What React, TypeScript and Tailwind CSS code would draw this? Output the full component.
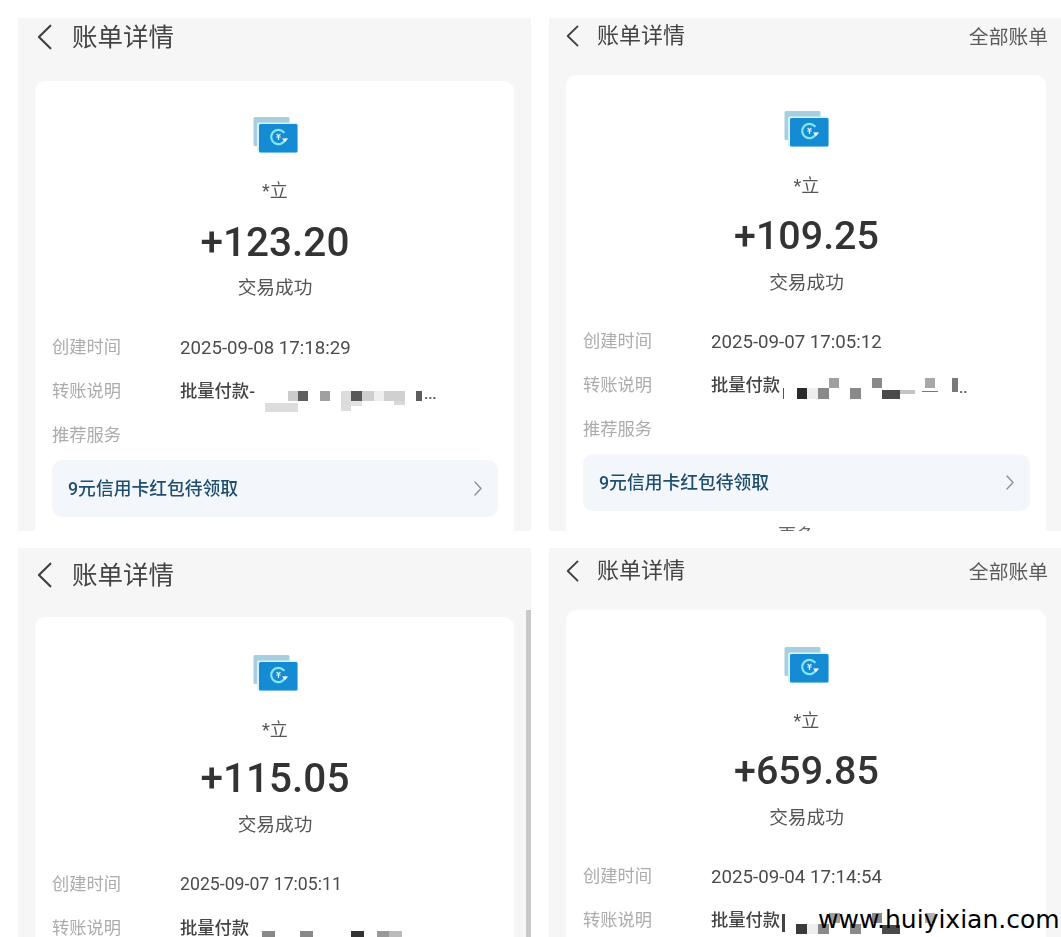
import React from "react";

type Block = [number, number, number, number, string];

const FONT = "font-['Roboto','Noto_Sans_CJK_SC',sans-serif]";

function BillIcon() {
  return (
    <svg width="46" height="38" viewBox="0 0 46 38" fill="none">
      <rect x="1.5" y="2" width="36" height="29" rx="1.5" fill="#a8cfe0" />
      <rect x="5" y="7.5" width="41" height="30.5" rx="2" fill="#d6f2fa" />
      <rect x="7" y="9" width="38.5" height="28.5" rx="1.5" fill="#148bd3" />
      <path d="M31.8 17.2a7.2 7.2 0 1 0 1.4 7.2" stroke="#86e8f5" strokeWidth="2.2" strokeLinecap="round" />
      <path d="M30 23.6h6.2l-3.1 3.3z" fill="#ffffff" />
      <path d="M24.6 19l1.9 2 1.9-2M24.3 22h4.4M26.5 21v4" stroke="#dff6fb" strokeWidth="1.2" />
    </svg>
  );
}

function Row({ label, children, valueClass }: { label: string; children?: React.ReactNode; valueClass: string }) {
  return (
    <div className="flex h-[44px] items-center">
      <span className="w-[128px] shrink-0 text-[17.3px] leading-none text-[#acacac]">{label}</span>
      <span className={valueClass}>{children}</span>
    </div>
  );
}

function Panel(props: {
  headerCls: string;
  cardCls: string;
  backCls: string;
  titleCls: string;
  amount: string;
  time: string;
  note: string;
  showAllCls?: string;
  promo?: boolean;
  rowsCls: string;
  amountCls: string;
  nameCls: string;
  statusCls: string;
  timeCls: string;
  iconCls: string;
  more?: boolean;
}) {
  return (
    <section className="flex flex-col overflow-hidden bg-[#f6f6f6] blur-[0.6px]">
      <header className={`flex shrink-0 items-start justify-between ${props.headerCls}`}>
        <div className="flex items-center">
          <svg className={props.backCls} viewBox="0 0 14 24" fill="none">
            <path d="M12.5 1.5L1.8 12l10.7 10.5" stroke="#3f3f3f" strokeWidth="2" strokeLinecap="round" strokeLinejoin="round" />
          </svg>
          <h1 className={`font-normal text-[#444444] ${props.titleCls}`}>账单详情</h1>
        </div>
        {props.showAllCls && (
          <span className={`mr-[13px] text-[19.8px] leading-[24px] text-[#5a5a5a] ${props.showAllCls}`}>全部账单</span>
        )}
      </header>
      <div className={`flex-1 rounded-t-[10px] bg-white pl-[17px] pr-[16px] ${props.cardCls}`}>
        <div className={`flex h-[38px] items-center justify-center ${props.iconCls}`}>
          <BillIcon />
        </div>
        <p className={`h-[28px] text-center text-[18px] leading-[28px] text-[#555555] ${props.nameCls}`}>*立</p>
        <p className={`h-[50px] text-center font-['Roboto'] font-medium leading-[50px] text-[#333333] ${props.amountCls}`}>
          {props.amount}
        </p>
        <p className={`h-[28px] text-center text-[18.7px] leading-[28px] text-[#555555] ${props.statusCls}`}>交易成功</p>
        <div className={props.rowsCls}>
          <Row label="创建时间" valueClass={`font-['Roboto'] leading-none text-[#4b4b4b] ${props.timeCls}`}>
            {props.time}
          </Row>
          <Row label="转账说明" valueClass="text-[17.3px] font-medium leading-none text-[#444444]">
            {props.note}
          </Row>
          {props.promo && <Row label="推荐服务" valueClass="" />}
        </div>
        {props.promo && (
          <div className="mt-[2px] flex h-[57px] items-center justify-between rounded-[10px] bg-[#f3f7fb] pl-[16px] pr-[16px]">
            <span className="text-[17.8px] font-medium leading-none text-[#1f4e6e]">9元信用卡红包待领取</span>
            <svg width="8" height="15" viewBox="0 0 8 15" fill="none">
              <path d="M1 1l6 6.5-6 6.5" stroke="#8a939a" strokeWidth="1.4" strokeLinecap="round" strokeLinejoin="round" />
            </svg>
          </div>
        )}
        {props.more && <p className="ml-[195px] mt-[15px] text-[18px] leading-[20px] text-[#666666]">更多</p>}
      </div>
    </section>
  );
}

const mosaics: Block[] = [
  [265, 403, 33, 9, "#dddddd"],
  [288, 391, 10, 10, "#cccccc"],
  [298, 391, 10, 10, "#606060"],
  [320, 391, 10, 10, "#a0a0a0"],
  [341, 391, 10, 20, "#dcdcdc"],
  [351, 391, 11, 10, "#585858"],
  [362, 391, 12, 10, "#cfcfcf"],
  [351, 401, 11, 5, "#e2e2e2"],
  [374, 391, 10, 10, "#efefef"],
  [384, 391, 21, 10, "#d0d0d0"],
  [394, 401, 11, 4, "#d8d8d8"],
  [416, 391, 6, 10, "#5e5e5e"],

  [797, 388, 10, 11, "#2a2a2a"],
  [807, 388, 11, 11, "#eeeeee"],
  [818, 388, 11, 11, "#8a8a8a"],
  [829, 378, 10, 10, "#a0a0a0"],
  [850, 388, 11, 11, "#8a8a8a"],
  [872, 378, 10, 10, "#8a8a8a"],
  [882, 390, 18, 9, "#4a4a4a"],
  [900, 390, 15, 4, "#c4c4c4"],
  [925, 378, 10, 10, "#a8a8a8"],
  [922, 391, 16, 1, "#777777"],
  [952, 378, 6, 14, "#7a7a7a"],
  [783, 388, 1, 11, "#555555"],

  [262, 931, 13, 6, "#888888"],
  [300, 931, 13, 6, "#888888"],
  [351, 931, 13, 6, "#333333"],
  [377, 931, 12, 6, "#999999"],
  [389, 931, 13, 6, "#bbbbbb"],

  [782, 914, 3, 18, "#444444"],
  [796, 924, 11, 10, "#3a3a3a"],
  [807, 924, 11, 10, "#eeeeee"],
  [818, 924, 11, 10, "#8a8a8a"],
  [829, 913, 11, 10, "#a0a0a0"],
  [850, 924, 11, 10, "#8a8a8a"],
  [872, 913, 10, 10, "#8a8a8a"],
  [882, 925, 18, 9, "#4a4a4a"],
  [925, 913, 10, 10, "#b0b0b0"],
];

export default function App() {
  return (
    <div className={`relative h-[937px] w-[1061px] overflow-hidden bg-white ${FONT}`}>
      <div className="grid h-full grid-cols-[513px_512px] grid-rows-[513px_389px] gap-x-[18px] gap-y-[17px] pl-[18px] pt-[18px]">
        <Panel
          headerCls="h-[63px] pl-[19px] pt-[4px]"
          backCls="h-[26px] w-[15px] mr-[20px]"
          titleCls="text-[25.5px] leading-[30px]"
          cardCls="mx-[17px] pt-[34px]"
          iconCls=""
          nameCls="mt-[24px]"
          amountCls="mt-[12px] text-[40.5px]"
          statusCls="mt-[7px]"
          rowsCls="mt-[24px]"
          timeCls="text-[18.65px]"
          amount="+123.20"
          time="2025-09-08 17:18:29"
          note="批量付款-"
          promo
        />
        <Panel
          showAllCls="mt-[3px]"
          headerCls="h-[57px] pl-[17px] pt-[5px]"
          backCls="h-[22px] w-[13px] mr-[18px]"
          titleCls="text-[22px] leading-[26px]"
          cardCls="ml-[17px] mr-[15px] pt-[34px]"
          iconCls="pr-[2px]"
          nameCls="mt-[25px]"
          amountCls="mt-[11px] text-[39.4px]"
          statusCls="mt-[8px]"
          rowsCls="mt-[23px]"
          timeCls="text-[18.65px]"
          amount="+109.25"
          time="2025-09-07 17:05:12"
          note="批量付款"
          promo
          more
        />
        <Panel
          headerCls="h-[69px] pl-[19px] pt-[12px]"
          backCls="h-[26px] w-[15px] mr-[20px]"
          titleCls="text-[25.5px] leading-[30px]"
          cardCls="mx-[17px] pt-[36px]"
          iconCls=""
          nameCls="mt-[25px]"
          amountCls="mt-[9px] text-[40.5px]"
          statusCls="mt-[8px]"
          rowsCls="mt-[24px]"
          timeCls="text-[17.7px]"
          amount="+115.05"
          time="2025-09-07 17:05:11"
          note="批量付款"
        />
        <Panel
          showAllCls="mt-[3px]"
          headerCls="h-[62px] pl-[17px] pt-[10px]"
          backCls="h-[22px] w-[13px] mr-[18px]"
          titleCls="text-[22px] leading-[26px]"
          cardCls="ml-[17px] mr-[15px] pt-[35px]"
          iconCls="pr-[2px]"
          nameCls="mt-[24px]"
          amountCls="mt-[11px] text-[39.4px]"
          statusCls="mt-[8px]"
          rowsCls="mt-[23px]"
          timeCls="text-[18.7px]"
          amount="+659.85"
          time="2025-09-04 17:14:54"
          note="批量付款"
        />
      </div>

      {mosaics.map(([x, y, w, h, c], i) => (
        <span key={i} className="absolute blur-[0.4px]" style={{ left: x, top: y, width: w, height: h, background: c }} />
      ))}
      <span className="absolute left-[424px] top-[386px] text-[15px] font-medium leading-[16px] text-[#555555]">...</span>
      <span className="absolute left-[959px] top-[380px] text-[15px] font-medium leading-[16px] text-[#555555]">..</span>

      <div className="absolute left-[526px] top-[610px] h-[327px] w-[5px] bg-[#c9c9c9]" />

      <span className="absolute left-[818px] top-[903px] font-['DejaVu_Sans',sans-serif] text-[25px] leading-[34px] text-black">
        www.huiyixian.com
      </span>
    </div>
  );
}
